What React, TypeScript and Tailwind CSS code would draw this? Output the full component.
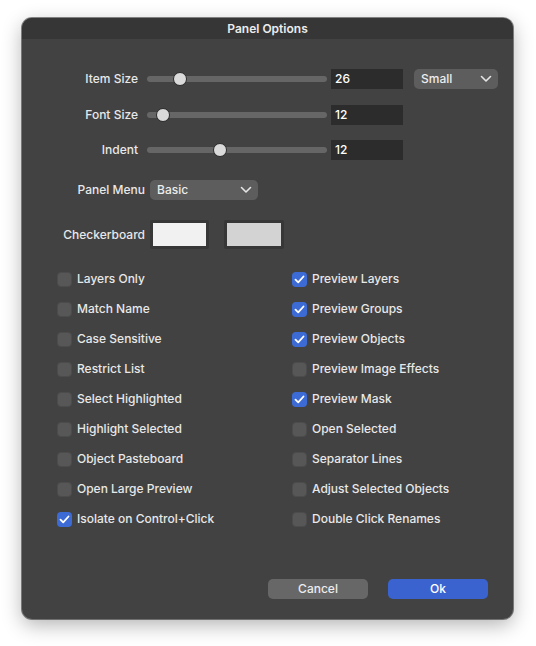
import { useState } from 'react';

const LEFT_OPTIONS: { label: string; checked: boolean }[] = [
  { label: 'Layers Only', checked: false },
  { label: 'Match Name', checked: false },
  { label: 'Case Sensitive', checked: false },
  { label: 'Restrict List', checked: false },
  { label: 'Select Highlighted', checked: false },
  { label: 'Highlight Selected', checked: false },
  { label: 'Object Pasteboard', checked: false },
  { label: 'Open Large Preview', checked: false },
  { label: 'Isolate on Control+Click', checked: true },
];

const RIGHT_OPTIONS: { label: string; checked: boolean }[] = [
  { label: 'Preview Layers', checked: true },
  { label: 'Preview Groups', checked: true },
  { label: 'Preview Objects', checked: true },
  { label: 'Preview Image Effects', checked: false },
  { label: 'Preview Mask', checked: true },
  { label: 'Open Selected', checked: false },
  { label: 'Separator Lines', checked: false },
  { label: 'Adjust Selected Objects', checked: false },
  { label: 'Double Click Renames', checked: false },
];

function Chevron() {
  return (
    <svg width="12" height="8" viewBox="0 0 12 8" fill="none" aria-hidden="true">
      <path d="M1.5 1.5 L6 6 L10.5 1.5" stroke="#e5e5e5" strokeWidth="1.6" strokeLinecap="round" strokeLinejoin="round" />
    </svg>
  );
}

function Slider({ pos }: { pos: number }) {
  // pos = thumb center in px from track start
  return (
    <div className="relative flex h-[20px] w-[180px] items-center">
      <div className="h-[6px] w-full rounded-full bg-[#666666]" />
      <div
        className="absolute top-[3px] h-[14px] w-[14px] rounded-full border border-[#2a2a2a] bg-[#dadada]"
        style={{ left: pos - 7 }}
      />
    </div>
  );
}

function NumberField({ value }: { value: string }) {
  return (
    <div className="flex h-[20px] w-[72px] items-center bg-[#2c2c2c] pl-[4px] text-[12px] text-white">{value}</div>
  );
}

function Select({ value, width }: { value: string; width: string }) {
  return (
    <div className={`flex h-[20px] ${width} items-center justify-between rounded-[5px] bg-[#5d5d5d] pl-[7px] pr-[6px] text-[12px] text-[#ececec]`}>
      <span>{value}</span>
      <Chevron />
    </div>
  );
}

function Checkbox({ label, checked }: { label: string; checked: boolean }) {
  const [on, setOn] = useState(checked);
  return (
    <button onClick={() => setOn(!on)} className="flex h-[30px] items-center gap-[5px] text-left">
      {on ? (
        <span className="flex h-[15px] w-[15px] items-center justify-center rounded-[4px] bg-[#3d6bd6]">
          <svg width="11" height="9" viewBox="0 0 11 9" fill="none" aria-hidden="true">
            <path d="M1.5 4.6 L4.2 7.3 L9.5 1.5" stroke="white" strokeWidth="1.8" strokeLinecap="round" strokeLinejoin="round" />
          </svg>
        </span>
      ) : (
        <span className="h-[15px] w-[15px] rounded-[4px] border border-[#4c4c4c] bg-[#575757]" />
      )}
      <span className="text-[12px] text-[#e8e8e8]">{label}</span>
    </button>
  );
}

export default function App() {
  return (
    <div className="min-h-screen bg-white pl-[22px] pt-[18px] font-medium" style={{ fontFamily: 'Inter, "Liberation Sans", Arial, sans-serif' }}>
      <div className="flex h-[601px] w-[491px] flex-col overflow-hidden rounded-[10px] bg-[#424242] shadow-[0_6px_20px_rgba(0,0,0,0.3),0_0_0_1px_rgba(0,0,0,0.45)]">
        {/* Title bar */}
        <div className="flex h-[21px] items-center justify-center bg-[#363636] text-[12px] font-semibold text-[#ececec]">
          Panel Options
        </div>

        <div className="flex flex-col pt-[30px]">
          {/* Slider rows */}
          <div className="flex items-center">
            <span className="w-[116px] text-right text-[12px] text-[#e8e8e8]">Item Size</span>
            <div className="ml-[9px]"><Slider pos={33} /></div>
            <div className="ml-[4px]"><NumberField value="26" /></div>
            <div className="ml-[11px]"><Select value="Small" width="w-[84px]" /></div>
          </div>
          <div className="mt-[16px] flex items-center">
            <span className="w-[116px] text-right text-[12px] text-[#e8e8e8]">Font Size</span>
            <div className="ml-[9px]"><Slider pos={16} /></div>
            <div className="ml-[4px]"><NumberField value="12" /></div>
          </div>
          <div className="mt-[15px] flex items-center">
            <span className="w-[116px] text-right text-[12px] text-[#e8e8e8]">Indent</span>
            <div className="ml-[9px]"><Slider pos={73} /></div>
            <div className="ml-[4px]"><NumberField value="12" /></div>
          </div>

          {/* Panel Menu */}
          <div className="mt-[20px] flex items-center">
            <span className="w-[123px] text-right text-[12px] text-[#e8e8e8]">Panel Menu</span>
            <div className="ml-[5px]"><Select value="Basic" width="w-[108px]" /></div>
          </div>

          {/* Checkerboard */}
          <div className="mt-[20px] flex items-center">
            <span className="w-[123px] text-right text-[12px] text-[#e8e8e8]">Checkerboard</span>
            <div className="ml-[5px] flex gap-[15px]">
              <div className="h-[29px] w-[59px] rounded-[2px] bg-[#373737] p-[3px]">
                <div className="h-full w-full bg-[#f1f1f1]" />
              </div>
              <div className="h-[29px] w-[60px] rounded-[2px] bg-[#373737] p-[3px]">
                <div className="h-full w-full bg-[#d3d3d3]" />
              </div>
            </div>
          </div>

          {/* Options grid */}
          <div className="mt-[15px] grid grid-cols-[235px_1fr] pl-[35px]">
            <div className="flex flex-col">
              {LEFT_OPTIONS.map((o) => (
                <Checkbox key={o.label} label={o.label} checked={o.checked} />
              ))}
            </div>
            <div className="flex flex-col">
              {RIGHT_OPTIONS.map((o) => (
                <Checkbox key={o.label} label={o.label} checked={o.checked} />
              ))}
            </div>
          </div>
        </div>

        {/* Buttons */}
        <div className="mt-auto flex justify-end gap-[20px] pb-[20px] pr-[25px]">
          <button className="h-[20px] w-[100px] rounded-[5px] bg-[#676767] text-[12px] text-[#ececec]">Cancel</button>
          <button className="h-[20px] w-[100px] rounded-[5px] bg-[#3b63d0] text-[12px] text-white">Ok</button>
        </div>
      </div>
    </div>
  );
}
